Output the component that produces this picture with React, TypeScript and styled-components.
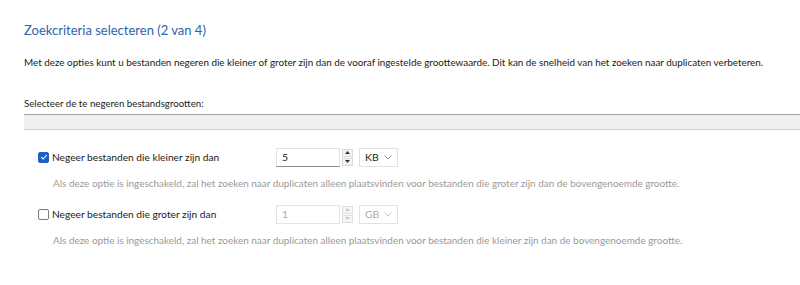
import React, { useState } from 'react';
import styled, { createGlobalStyle } from 'styled-components';

const GlobalStyle = createGlobalStyle`
  html, body {
    margin: 0;
    padding: 0;
    background: #fff;
  }
  body {
    font-family: Lato, "Open Sans", Arial, sans-serif;
    color: #1a1a1a;
  }
`

type Option = {
  id: string
  label: string
  hint: string
  value: string
  unit: string
  checked: boolean
}

const initialOptions: Option[] = [
  {
    id: 'min',
    label: 'Negeer bestanden die kleiner zijn dan',
    hint: 'Als deze optie is ingeschakeld, zal het zoeken naar duplicaten alleen plaatsvinden voor bestanden die groter zijn dan de bovengenoemde grootte.',
    value: '5',
    unit: 'KB',
    checked: true,
  },
  {
    id: 'max',
    label: 'Negeer bestanden die groter zijn dan',
    hint: 'Als deze optie is ingeschakeld, zal het zoeken naar duplicaten alleen plaatsvinden voor bestanden die kleiner zijn dan de bovengenoemde grootte.',
    value: '1',
    unit: 'GB',
    checked: false,
  },
]

const CheckMark = () => (
  <svg width="8" height="8" viewBox="0 0 8 8">
    <path d="M1.3 4.2 L3.2 6 L6.8 2" fill="none" stroke="#fff" strokeWidth="1.1" />
  </svg>
)

const Chevron = ({ color }: { color: string }) => (
  <svg width="8" height="5" viewBox="0 0 8 5">
    <path d="M0.5 0.5 L4 4 L7.5 0.5" fill="none" stroke={color} strokeWidth="0.9" />
  </svg>
)

const SpinArrow = ({ up, color }: { up?: boolean; color: string }) => (
  <svg width="5" height="3" viewBox="0 0 5 3">
    <path d={up ? 'M0 3 L2.5 0 L5 3 Z' : 'M0 0 L2.5 3 L5 0 Z'} fill={color} />
  </svg>
)

const App = () => {
  const [options, setOptions] = useState(initialOptions)

  const toggle = (id: string) => {
    setOptions(options.map(o => (o.id === id ? { ...o, checked: !o.checked } : o)))
  }

  return (
    <Page>
      <GlobalStyle />
      <Title>Zoekcriteria selecteren (2 van 4)</Title>
      <Intro>
        Met deze opties kunt u bestanden negeren die kleiner of groter zijn dan de vooraf ingestelde
        groottewaarde. Dit kan de snelheid van het zoeken naar duplicaten verbeteren.
      </Intro>
      <SectionLabel>Selecteer de te negeren bestandsgrootten:</SectionLabel>
      <Band />
      <OptionList>
        {options.map(o => (
          <OptionBlock key={o.id}>
            <OptionRow>
              <CheckLabel onClick={() => toggle(o.id)}>
                <Box checked={o.checked}>{o.checked && <CheckMark />}</Box>
                <span>{o.label}</span>
              </CheckLabel>
              <Controls>
                <NumberField disabled={!o.checked}>{o.value}</NumberField>
                <Spinner disabled={!o.checked}>
                  <SpinBtn><SpinArrow up color={o.checked ? '#333' : '#bbb'} /></SpinBtn>
                  <SpinBtn><SpinArrow color={o.checked ? '#333' : '#bbb'} /></SpinBtn>
                </Spinner>
                <UnitSelect disabled={!o.checked}>
                  <span>{o.unit}</span>
                  <Chevron color={o.checked ? '#777' : '#c4c4c4'} />
                </UnitSelect>
              </Controls>
            </OptionRow>
            <Hint>{o.hint}</Hint>
          </OptionBlock>
        ))}
      </OptionList>
    </Page>
  )
}

const Page = styled.div`
  width: 800px;
  height: 285px;
  overflow: hidden;
  padding: 21px 0 0 24px;
  box-sizing: border-box;
`
const Title = styled.h1`
  margin: 0;
  font-size: 13px;
  font-weight: 400;
  color: #2f62ad;
  line-height: 18px;
`
const Intro = styled.p`
  margin: 16px 0 0;
  font-size: 9.87px;
  line-height: 14px;
  color: #1a1a1a;
  white-space: nowrap;
`
const SectionLabel = styled.div`
  margin-top: 27px;
  font-size: 9.7px;
  line-height: 14px;
  color: #1a1a1a;
`
const Band = styled.div`
  margin-top: 4px;
  height: 14px;
  border-top: 1px solid #a3a3a3;
  border-bottom: 1px solid #cfcfcf;
  background: #efefef;
`
const OptionList = styled.div`
  display: flex;
  flex-direction: column;
  gap: 14px;
  padding: 17px 0 0 14px;
`
const OptionBlock = styled.div`
  display: flex;
  flex-direction: column;
  gap: 9px;
`
const OptionRow = styled.div`
  display: flex;
  align-items: center;
  height: 20px;
`
const CheckLabel = styled.label`
  display: flex;
  align-items: center;
  gap: 3px;
  width: 238px;
  font-size: 10.2px;
  color: #1a1a1a;
  cursor: default;
`
const Box = styled.span<{ checked: boolean }>`
  width: 11px;
  height: 11px;
  box-sizing: border-box;
  border-radius: 2px;
  display: flex;
  align-items: center;
  justify-content: center;
  background: ${({ checked }) => (checked ? '#1d62c4' : '#fff')};
  border: 1px solid ${({ checked }) => (checked ? '#1d62c4' : '#7a7a7a')};
`
const Controls = styled.div`
  display: flex;
  align-items: center;
  height: 20px;
`
const NumberField = styled.div<{ disabled: boolean }>`
  width: 64px;
  height: 19px;
  box-sizing: border-box;
  padding: 0 5px;
  display: flex;
  align-items: center;
  font-size: 10.4px;
  color: ${({ disabled }) => (disabled ? '#aaa' : '#1a1a1a')};
  border: 1px solid #e2e2e2;
  border-bottom-color: ${({ disabled }) => (disabled ? '#e2e2e2' : '#8a8a8a')};
`
const Spinner = styled.div<{ disabled: boolean }>`
  display: flex;
  flex-direction: column;
  gap: 1px;
  margin-left: 2px;
  opacity: ${({ disabled }) => (disabled ? 0.8 : 1)};
`
const SpinBtn = styled.div`
  width: 11px;
  height: 8px;
  border: 1px solid #d8d8d8;
  background: #f4f4f4;
  box-sizing: border-box;
  display: flex;
  align-items: center;
  justify-content: center;
`
const UnitSelect = styled.div<{ disabled: boolean }>`
  margin-left: 6px;
  width: 39px;
  height: 19px;
  box-sizing: border-box;
  border: 1px solid #e2e2e2;
  display: flex;
  align-items: center;
  justify-content: space-between;
  padding: 0 5px 0 5px;
  font-size: 10.4px;
  color: ${({ disabled }) => (disabled ? '#aaa' : '#1a1a1a')};
`
const Hint = styled.div`
  padding-left: 15px;
  font-size: 9.95px;
  line-height: 14px;
  color: #9a9a9a;
  white-space: nowrap;
`

export default App
